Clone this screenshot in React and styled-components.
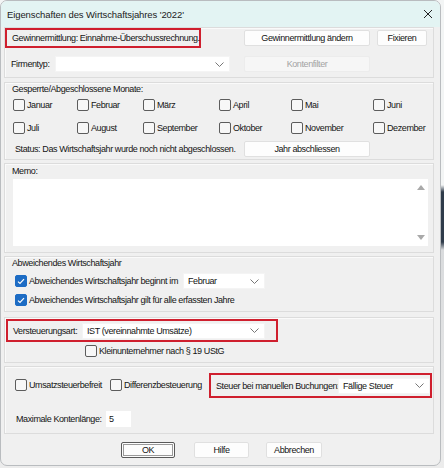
import React from 'react';
import styled, { createGlobalStyle } from 'styled-components';

const FONT = `"Liberation Sans Narrow", "Arial Narrow", "Liberation Sans", Arial, sans-serif`;

const Global = createGlobalStyle`
  html, body { margin: 0; padding: 0; }
  body {
    width: 444px;
    height: 468px;
    overflow: hidden;
    background: linear-gradient(to bottom, #f3f5f5 0, #f3f5f5 185px, #2f3b4a 192px, #2f3b4a 242px, #d9dbdd 250px, #ececec 100%);
    font-family: ${FONT};
    font-size: 9px;
    letter-spacing: -0.4px;
    color: #141414;
  }
`;

const Window = styled.div`
  box-sizing: border-box;
  width: 441px;
  height: 466px;
  border: 1px solid #b9bcbf;
  border-radius: 7px;
  background: #f0f0f0;
  overflow: hidden;
  display: flex;
  flex-direction: column;
`;

const TitleBar = styled.div`
  height: 26px;
  flex: none;
  background: #e3f4f3;
  display: flex;
  align-items: center;
  justify-content: space-between;
  padding: 0 7px 0 6px;
  font-size: 9.5px;
  letter-spacing: -0.1px;
  color: #1b1b1b;
`;

const Body = styled.div`
  display: flex;
  flex-direction: column;
  padding: 0 6px 0 3px;
`;

const Panel = styled.div`
  box-sizing: border-box;
  height: ${p => p.$h}px;
  margin-top: ${p => p.$mt || 0}px;
  border: 1px solid #dcdcdc;
  box-shadow: inset 1px 1px 0 #fafafa;
  display: flex;
  flex-direction: column;
`;

const Row = styled.div`
  display: flex;
  align-items: center;
  height: ${p => p.$h || 14}px;
  margin-top: ${p => p.$mt || 0}px;
  padding-left: ${p => p.$pl || 0}px;
  flex: none;
`;

const RedBox = styled.div`
  box-sizing: border-box;
  display: flex;
  align-items: center;
  width: ${p => p.$w}px;
  height: ${p => p.$h}px;
  margin-left: ${p => p.$ml || 0}px;
  border: 2px solid #cf1f2e;
  padding-left: ${p => p.$pl || 5}px;
  white-space: nowrap;
`;

const Button = styled.button`
  box-sizing: border-box;
  width: ${p => p.$w}px;
  height: ${p => p.$h || 16}px;
  margin-left: ${p => p.$ml || 0}px;
  padding: 0;
  font-family: ${FONT};
  font-size: 9px;
  letter-spacing: -0.4px;
  color: ${p => (p.disabled ? '#a3a3a3' : '#141414')};
  background: ${p => (p.disabled ? '#f6f6f6' : '#fdfdfd')};
  border: 1px solid ${p => (p.$focus ? '#5a5a5a' : p.disabled ? '#ececec' : '#e0e0e0')};
  border-radius: 2px;
  box-shadow: ${p => (p.$focus ? 'inset 0 0 0 1px #fdfdfd, inset 0 0 0 2px #9a9a9a' : 'none')};
  flex: none;
`;

const Label = styled.span`
  display: inline-block;
  width: ${p => (p.$w ? `${p.$w}px` : 'auto')};
  margin-left: ${p => p.$ml || 0}px;
  white-space: nowrap;
  flex: none;
`;

const ComboBox = styled.div`
  box-sizing: border-box;
  width: ${p => p.$w}px;
  height: 16px;
  margin-left: ${p => p.$ml || 0}px;
  background: #fff;
  border: 1px solid #f4f4f4;
  display: flex;
  align-items: center;
  justify-content: space-between;
  padding: 0 5px 0 4px;
  white-space: nowrap;
  flex: none;
`;

const Chevron = () => (
  <svg width="9" height="5" viewBox="0 0 9 5">
    <path d="M0.5 0.5 L4.5 4.5 L8.5 0.5" fill="none" stroke="#777" strokeWidth="1" />
  </svg>
);

const Combo = ({ w, ml, children }) => (
  <ComboBox $w={w} $ml={ml}>
    <span>{children}</span>
    <Chevron />
  </ComboBox>
);

const CheckWrap = styled.label`
  display: inline-flex;
  align-items: center;
  gap: 2px;
  margin-left: ${p => p.$ml || 0}px;
  white-space: nowrap;
  flex: none;
`;

const Box = styled.span`
  box-sizing: border-box;
  width: 12px;
  height: 12px;
  border-radius: 2px;
  border: 1px solid ${p => (p.$checked ? '#1d6cc4' : '#5c5c5c')};
  background: ${p => (p.$checked ? '#1d6cc4' : '#f7f7f7')};
  display: inline-flex;
  align-items: center;
  justify-content: center;
`;

const Check = ({ checked, label, ml }) => (
  <CheckWrap $ml={ml}>
    <Box $checked={checked}>
      {checked && (
        <svg width="8" height="7" viewBox="0 0 8 7">
          <path d="M1 3.6 L3 5.5 L7 1.2" fill="none" stroke="#fff" strokeWidth="1.2" />
        </svg>
      )}
    </Box>
    <span>{label}</span>
  </CheckWrap>
);

const MonthGrid = styled.div`
  display: grid;
  grid-template-columns: 64px 66px 76px 72px 82px auto;
  grid-auto-rows: 14px;
  row-gap: 9px;
  margin-top: 3px;
  padding-left: 8px;
  align-items: center;
`;

const Memo = styled.div`
  box-sizing: border-box;
  width: 415px;
  height: 67px;
  margin: 2px 0 0 8px;
  background: #fff;
  display: flex;
  justify-content: flex-end;
`;

const ScrollBar = styled.div`
  width: 14px;
  display: flex;
  flex-direction: column;
  justify-content: space-between;
  align-items: center;
  padding: 6px 0 6px;
`;

const Arrow = ({ down }) => (
  <svg width="8" height="5" viewBox="0 0 8 5">
    <path d={down ? 'M0 0 L8 0 L4 5 Z' : 'M0 5 L8 5 L4 0 Z'} fill="#a9a9a9" />
  </svg>
);

const Input = styled.div`
  box-sizing: border-box;
  width: 25px;
  height: 16px;
  background: #fff;
  padding-left: 3px;
  display: flex;
  align-items: center;
  flex: none;
`;

const ButtonRow = styled.div`
  display: flex;
  height: 16px;
  margin-top: 8px;
  padding-left: 117px;
`;

const months1 = ['Januar', 'Februar', 'März', 'April', 'Mai', 'Juni'];
const months2 = ['Juli', 'August', 'September', 'Oktober', 'November', 'Dezember'];

export default function App() {
  return (
    <>
      <Global />
      <Window>
        <TitleBar>
          <span>Eigenschaften des Wirtschaftsjahres '2022'</span>
          <svg width="10" height="10" viewBox="0 0 10 10">
            <path d="M1 1 L9 9 M9 1 L1 9" stroke="#222" strokeWidth="1" />
          </svg>
        </TitleBar>
        <Body>
          <Panel $h={51}>
            <Row $h={20}>
              <RedBox $w={196} $h={20}>Gewinnermittlung: Einnahme-Überschussrechnung.</RedBox>
              <Button $w={126} $ml={43}>Gewinnermittlung ändern</Button>
              <Button $w={50} $ml={7}>Fixieren</Button>
            </Row>
            <Row $h={16} $mt={8} $pl={6}>
              <Label $w={44}>Firmentyp:</Label>
              <Combo w={175} />
              <Button $w={126} $ml={14} disabled>Kontenfilter</Button>
            </Row>
          </Panel>

          <Panel $h={78} $mt={4}>
            <Row $h={12} $pl={7}>
              <Label>Gesperrte/Abgeschlossene Monate:</Label>
            </Row>
            <MonthGrid>
              {[...months1, ...months2].map(m => (
                <Check key={m} label={m} />
              ))}
            </MonthGrid>
            <Row $h={16} $mt={6} $pl={10}>
              <Label $w={229}>Status: Das Wirtschaftsjahr wurde noch nicht abgeschlossen.</Label>
              <Button $w={126}>Jahr abschliessen</Button>
            </Row>
          </Panel>

          <Panel $h={90} $mt={3}>
            <Row $h={12} $mt={1} $pl={7}>
              <Label>Memo:</Label>
            </Row>
            <Memo>
              <ScrollBar>
                <Arrow />
                <Arrow down />
              </ScrollBar>
            </Memo>
          </Panel>

          <Panel $h={56} $mt={3}>
            <Row $h={12} $pl={7}>
              <Label>Abweichendes Wirtschaftsjahr</Label>
            </Row>
            <Row $h={16} $mt={4} $pl={10}>
              <Label $w={168}>
                <Check checked label="Abweichendes Wirtschaftsjahr beginnt im" />
              </Label>
              <Combo w={82}>Februar</Combo>
            </Row>
            <Row $h={14} $mt={4} $pl={10}>
              <Check checked label="Abweichendes Wirtschaftsjahr gilt für alle erfassten Jahre" />
            </Row>
          </Panel>

          <Panel $h={46} $mt={5}>
            <Row $h={23} $mt={1}>
              <RedBox $w={272} $h={23} $ml={1} $pl={5}>
                <Label $w={69}>Versteuerungsart:</Label>
                <Combo w={183}>IST (vereinnahmte Umsätze)</Combo>
              </RedBox>
            </Row>
            <Row $h={14} $mt={2} $pl={80}>
              <Check label="Kleinunternehmer nach § 19 UStG" />
            </Row>
          </Panel>

          <Panel $h={68} $mt={3}>
            <Row $h={25} $mt={6} $pl={10}>
              <Label $w={95}>
                <Check label="Umsatzsteuerbefreit" />
              </Label>
              <Label $w={99}>
                <Check label="Differenzbesteuerung" />
              </Label>
              <RedBox $w={223} $h={25} $pl={5}>
                <Label $w={122}>Steuer bei manuellen Buchungen:</Label>
                <Combo w={92}>Fällige Steuer</Combo>
              </RedBox>
            </Row>
            <Row $h={16} $mt={13} $pl={11}>
              <Label $w={90}>Maximale Kontenlänge:</Label>
              <Input>5</Input>
            </Row>
          </Panel>

          <ButtonRow>
            <Button $w={54} $focus>OK</Button>
            <Button $w={55} $ml={19}>Hilfe</Button>
            <Button $w={56} $ml={17}>Abbrechen</Button>
          </ButtonRow>
        </Body>
      </Window>
    </>
  );
}
